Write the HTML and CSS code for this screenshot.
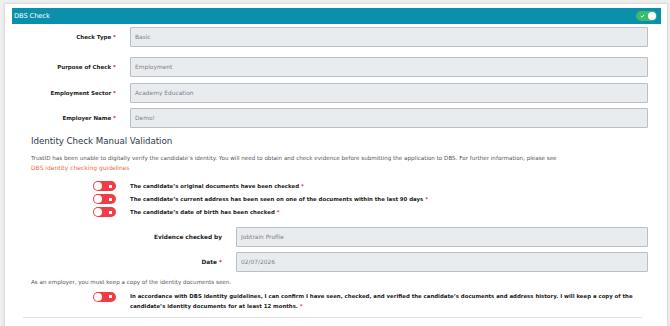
FILE: index.html
```html
<!DOCTYPE html>
<html>
<head>
<meta charset="utf-8">
<link rel="stylesheet" href="styles.css">
</head>
<body>
<div class="card">
  <div class="header">
    <span class="title">DBS Check</span>
    <span class="hswitch">
      <svg class="tick" viewBox="0 0 6 5" width="5" height="4"><path d="M0.8 2.6 L2.3 4 L5.2 1" fill="none" stroke="#fff" stroke-width="1.2"/></svg>
      <span class="knob"></span>
    </span>
  </div>

  <div class="form">
    <div class="row first">
      <label class="lbl">Check Type <span class="req">*</span></label>
      <div class="input">Basic</div>
    </div>
    <div class="row">
      <label class="lbl">Purpose of Check <span class="req">*</span></label>
      <div class="input">Employment</div>
    </div>
    <div class="row">
      <label class="lbl">Employment Sector <span class="req">*</span></label>
      <div class="input">Academy Education</div>
    </div>
    <div class="row">
      <label class="lbl">Employer Name <span class="req">*</span></label>
      <div class="input">Demo!</div>
    </div>
  </div>

  <div class="section">
    <h2 class="heading">Identity Check Manual Validation</h2>
    <p class="note">TrustID has been unable to digitally verify the candidate’s identity. You will need to obtain and check evidence before submitting the application to DBS. For further information, please see</p>
    <a class="link">DBS identity checking guidelines</a>

    <div class="checks">
      <div class="check">
        <span class="toggle"><span class="dot"></span><span class="sq"></span></span>
        <span class="ctext">The candidate’s original documents have been checked <span class="req">*</span></span>
      </div>
      <div class="check">
        <span class="toggle"><span class="dot"></span><span class="sq"></span></span>
        <span class="ctext">The candidate’s current address has been seen on one of the documents within the last 90 days <span class="req">*</span></span>
      </div>
      <div class="check">
        <span class="toggle"><span class="dot"></span><span class="sq"></span></span>
        <span class="ctext">The candidate’s date of birth has been checked <span class="req">*</span></span>
      </div>
    </div>

    <div class="evidence">
      <div class="erow">
        <label class="lbl">Evidence checked by</label>
        <div class="input">Jobtrain Profile</div>
      </div>
      <div class="erow">
        <label class="lbl">Date <span class="req">*</span></label>
        <div class="input">02/07/2026</div>
      </div>
    </div>

    <p class="note keep">As an employer, you must keep a copy of the identity documents seen.</p>

    <div class="check confirm">
      <span class="toggle"><span class="dot"></span><span class="sq"></span></span>
      <p class="ctext required">In accordance with DBS identity guidelines, I can confirm I have seen, checked, and verified the candidate’s documents and address history. I will keep a copy of the candidate’s identity documents for at least 12 months.</p>
    </div>
  </div>
  <div class="sep"></div>
</div>
</body>
</html>
```

FILE: styles.css
```css
* { box-sizing: border-box; }
html, body { margin: 0; padding: 0; }
body {
  background: #efefef;
  font-family: "DejaVu Sans", "Liberation Sans", sans-serif;
  color: #222;
  height: 326px;
  overflow: hidden;
}
.card {
  margin: 3px 2px 0 4px;
  background: #fff;
  border: 1px solid #dedede;
  box-shadow: 0 0 3px rgba(0,0,0,0.08);
  padding: 4px 6px 20px 7px;
  height: 340px;
}
.header {
  height: 16px;
  background: #0a90ab;
  display: flex;
  align-items: center;
  justify-content: space-between;
  padding: 0 4px 0 2px;
}
.title {
  color: #fff;
  font-size: 6.7px;
  letter-spacing: -0.1px;
}
.hswitch {
  width: 21px;
  height: 10px;
  border-radius: 5px;
  background: #3dba6e;
  display: flex;
  align-items: center;
  justify-content: space-between;
  padding: 0 1px 0 4px;
}
.tick { display: block; }
.knob {
  width: 8px;
  height: 8px;
  border-radius: 50%;
  background: #fff;
}
.form { margin-right: 13px; }
.row {
  display: grid;
  grid-template-columns: 104px 1fr;
  column-gap: 14px;
  align-items: center;
  margin-top: 5.5px;
}
.row.first { margin-top: 3px; margin-bottom: 10px; }
.lbl {
  text-align: right;
  font-weight: bold;
  font-size: 5.5px;
  color: #222;
  white-space: nowrap;
}
.req { color: #e0202a; font-weight: bold; }
.input {
  height: 20px;
  background: #e9ecef;
  border: 1px solid #b9bfc6;
  border-radius: 1px;
  font-size: 5.9px;
  color: #7d8288;
  display: flex;
  align-items: center;
  padding-left: 4px;
}
.section { padding-left: 19px; margin-right: 13px; }
.heading {
  margin: 8px 0 0 0;
  font-size: 8.7px;
  line-height: 10px;
  font-weight: normal;
  color: #2b3a4c;
  letter-spacing: -0.05px;
}
.note {
  margin: 7px 0 0 0;
  font-size: 5.6px;
  line-height: 10px;
  color: #555;
  white-space: nowrap;
}
.link {
  display: block;
  font-size: 6px;
  line-height: 10px;
  color: #ef6a45;
}
.checks { margin-top: 6.5px; margin-left: -19px; }
.check {
  display: grid;
  grid-template-columns: 104px 1fr;
  column-gap: 14px;
  align-items: center;
  height: 13px;
}
.toggle {
  justify-self: end;
  width: 23px;
  height: 10px;
  border-radius: 5px;
  background: #f03c44;
  display: flex;
  align-items: center;
  justify-content: space-between;
  padding: 0 4px 0 1px;
}
.dot {
  width: 8px;
  height: 8px;
  border-radius: 50%;
  background: #fff;
}
.sq {
  width: 3px;
  height: 3px;
  background: #fff;
}
.ctext {
  margin: 0;
  font-size: 5.4px;
  font-weight: bold;
  color: #222;
  line-height: 10px;
}
.required::after {
  content: " *";
  color: #e0202a;
}
.evidence { margin-top: 8px; margin-left: 99px; }
.erow {
  display: grid;
  grid-template-columns: 92px 1fr;
  column-gap: 14px;
  align-items: center;
  margin-bottom: 5px;
}
.erow .lbl { font-weight: 600; font-size: 5.8px; }
.note.keep { margin-top: 1px; }
.check.confirm {
  margin-left: -19px;
  margin-top: 4px;
  height: auto;
  align-items: start;
}
.confirm .toggle { margin-top: 1px; }
.sep {
  margin: 6px 19px 0 11px;
  border-top: 1px solid #e2e2e2;
}
```
